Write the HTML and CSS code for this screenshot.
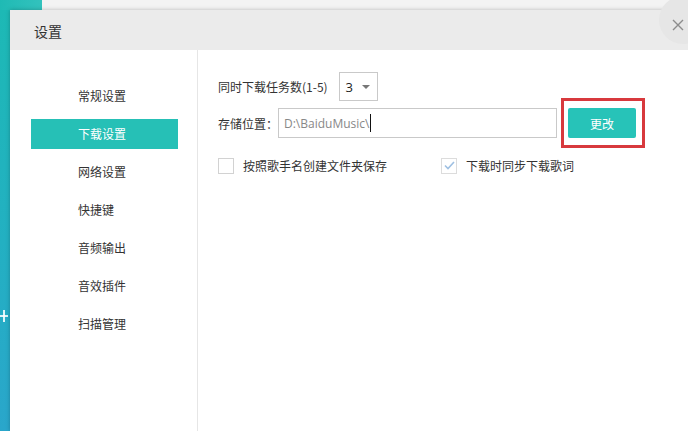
FILE: index.html
```html
<!DOCTYPE html>
<html lang="zh-CN">
<head>
<meta charset="utf-8">
<title>设置</title>
<link rel="stylesheet" href="styles.css">
</head>
<body>
<div class="app">
  <div class="app-top"><div class="app-top-accent"></div></div>
  <div class="app-side"><span class="app-plus"></span></div>
  <div class="dialog">
    <div class="dialog-title">设置</div>
    <button class="dialog-close" aria-label="关闭">
      <svg width="12" height="12" viewBox="0 0 12 12"><path d="M1 1 L11 11 M11 1 L1 11" stroke="#8c8c8c" stroke-width="1.4" fill="none"/></svg>
    </button>
    <div class="dialog-body">
      <ul class="nav">
        <li class="nav-item">常规设置</li>
        <li class="nav-item nav-item-active">下载设置</li>
        <li class="nav-item">网络设置</li>
        <li class="nav-item">快捷键</li>
        <li class="nav-item">音频输出</li>
        <li class="nav-item">音效插件</li>
        <li class="nav-item">扫描管理</li>
      </ul>
      <div class="panel">
        <div class="row">
          <span class="label">同时下载任务数(1-5)</span>
          <div class="select"><span class="select-value">3</span><span class="select-arrow"></span></div>
        </div>
        <div class="row row-path">
          <span class="label label-path">存储位置：</span>
          <div class="input"><span class="input-text">D:\BaiduMusic\</span><span class="caret"></span></div>
          <span class="btn-wrap"><button class="btn">更改</button></span>
        </div>
        <div class="row row-checks">
          <label class="check check-first"><span class="box"></span><span class="check-label">按照歌手名创建文件夹保存</span></label>
          <label class="check"><span class="box box-on"><svg width="11" height="9" viewBox="0 0 11 9"><path d="M1 4.5 L4 7.5 L10 1" stroke="#9fc0e2" stroke-width="1.6" fill="none"/></svg></span><span class="check-label">下载时同步下载歌词</span></label>
        </div>
      </div>
    </div>
  </div>
</div>
</body>
</html>
```
FILE: styles.css
```css
* { box-sizing: border-box; }
html, body { margin: 0; padding: 0; }
body {
  width: 688px;
  height: 431px;
  overflow: hidden;
  font-family: "Microsoft YaHei", "Noto Sans CJK SC", "Noto Sans", sans-serif;
  font-size: 12px;
  color: #333;
  background: #fff;
}
.app {
  width: 688px;
  height: 431px;
  display: grid;
  grid-template-columns: 10px 1fr;
  grid-template-rows: 10px 1fr;
}
.app-top {
  grid-column: 1 / 3;
  grid-row: 1;
  display: flex;
  background: #f3f3f3;
}
.app-top-accent {
  width: 42px;
  background: linear-gradient(90deg, #1fbab4, #33c2bd);
}
.app-side {
  grid-column: 1;
  grid-row: 2;
  background: linear-gradient(180deg, #1db9b5 0%, #23b0c2 55%, #2aa6cb 100%);
  padding-top: 300px;
  overflow: hidden;
}
.app-plus {
  display: block;
  position: relative;
  width: 10px;
  height: 12px;
}
.app-plus::before {
  content: "";
  position: absolute;
  left: 0;
  top: 5px;
  width: 8px;
  height: 2px;
  background: rgba(255,255,255,0.85);
}
.app-plus::after {
  content: "";
  position: absolute;
  left: 3px;
  top: 0;
  width: 2px;
  height: 12px;
  background: rgba(255,255,255,0.85);
}
.dialog {
  grid-column: 2;
  grid-row: 2;
  position: relative;
  display: flex;
  flex-direction: column;
  background: #fff;
  box-shadow: 0 0 4px rgba(0,0,0,0.25);
}
.dialog-title {
  height: 40px;
  flex: none;
  background: #ebebeb;
  font-size: 14px;
  line-height: 20px;
  padding: 11px 0 0 24px;
  color: #333;
}
.dialog-close {
  position: absolute;
  top: -14px;
  right: -19px;
  width: 48px;
  height: 48px;
  border-radius: 50%;
  border: 0;
  padding: 0;
  background: #e6e6e6;
  display: flex;
  align-items: center;
  justify-content: center;
}
.dialog-close svg {
  margin: 10px 10px 0 0;
}
.dialog-body {
  flex: 1;
  display: flex;
}
.nav {
  list-style: none;
  margin: 0;
  width: 188px;
  padding: 31px 0 0 21px;
  border-right: 1px solid #e6e6e6;
  display: flex;
  flex-direction: column;
  gap: 8px;
}
.nav-item {
  width: 147px;
  height: 30px;
  line-height: 30px;
  padding-left: 47px;
  color: #333;
}
.nav-item-active {
  background: #26c0b6;
  color: #fff;
}
.panel {
  flex: 1;
  padding: 22px 0 0 20px;
  display: flex;
  flex-direction: column;
}
.row {
  display: flex;
  align-items: center;
}
.select {
  margin-left: 11px;
  width: 39px;
  height: 29px;
  border: 1px solid #c9c9c9;
  display: flex;
  align-items: center;
  padding-left: 6px;
}
.select-value {
  font-family: "Open Sans", "Noto Sans", sans-serif;
  font-size: 13px;
  color: #222;
}
.select-arrow {
  margin-left: auto;
  margin-right: 7px;
  width: 0;
  height: 0;
  border-left: 4px solid transparent;
  border-right: 4px solid transparent;
  border-top: 4px solid #777;
}
.row-path {
  margin-top: 7px;
}
.label-path {
  width: 60px;
}
.input {
  width: 279px;
  height: 30px;
  border: 1px solid #c9c9c9;
  display: flex;
  align-items: center;
  padding-left: 5px;
}
.input-text {
  font-family: "Open Sans", "Noto Sans", sans-serif;
  font-size: 12px;
  color: #888;
}
.caret {
  width: 1px;
  height: 18px;
  background: #111;
  margin-left: 1px;
}
.btn-wrap {
  position: relative;
  margin-left: 11px;
  display: flex;
}
.btn-wrap::after {
  content: "";
  position: absolute;
  top: -10px;
  bottom: -10px;
  left: -7px;
  right: -9px;
  border: 3px solid #d8393d;
}
.btn {
  width: 68px;
  height: 30px;
  border: 0;
  border-radius: 2px;
  background: #27c3b8;
  color: #fff;
  font-family: "Microsoft YaHei", "Noto Sans CJK SC", sans-serif;
  font-size: 12px;
  padding: 0;
}
.row-checks {
  margin-top: 19px;
}
.check {
  display: flex;
  align-items: center;
}
.check-first {
  width: 223px;
}
.box {
  width: 16px;
  height: 16px;
  border: 1px solid #d2d2d2;
  background: #fff;
  display: flex;
  align-items: center;
  justify-content: center;
}
.box-on {
  border-color: #dcdcdc;
}
.check-label {
  margin-left: 9px;
  color: #333;
}
```
